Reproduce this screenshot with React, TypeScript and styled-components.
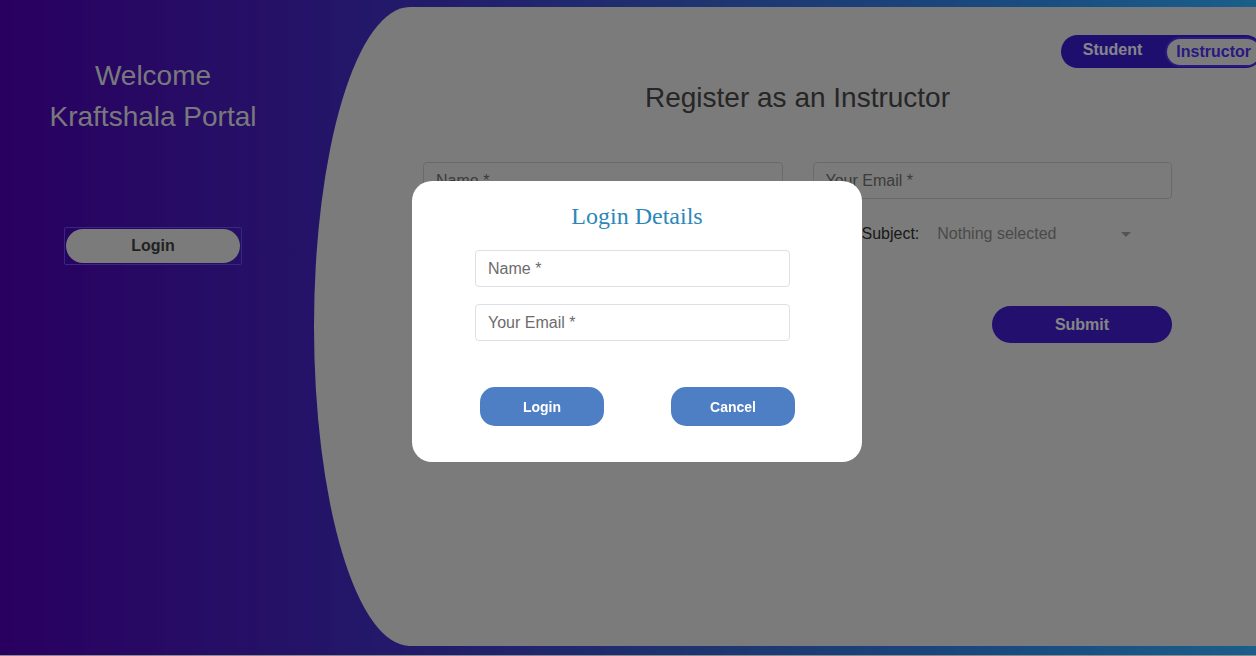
import React from "react";
import styled, { createGlobalStyle } from "styled-components";

const GlobalStyle = createGlobalStyle`
  html, body {
    margin: 0;
    padding: 0;
    background: #ffffff;
    overflow: hidden;
    font-family: "Liberation Sans", Arial, sans-serif;
  }
  * { box-sizing: border-box; }
`;

const Page = styled.div`
  display: flex;
  height: 655px;
  padding: 7px 0 9px 0;
  background: linear-gradient(
    to right,
    #4c00af 0%,
    #402fc1 32%,
    #3860cc 56%,
    #2f87e9 80%,
    #30acfb 100%
  );
`;

const Sidebar = styled.aside`
  width: 306px;
  flex-shrink: 0;
  display: flex;
  flex-direction: column;
  align-items: center;
  padding-top: 48px;
`;

const Welcome = styled.h1`
  margin: 0;
  font-size: 28px;
  font-weight: normal;
  line-height: 41px;
  color: #dcdce2;
  text-align: center;
`;

const FocusFrame = styled.div`
  margin-top: 90px;
  padding: 1px;
  border: 1px solid #5d4be5;
  border-radius: 2px;
`;

const SideButton = styled.button`
  display: block;
  width: 174px;
  height: 34px;
  border: none;
  border-radius: 17px;
  background: #e0e1e0;
  color: #3e3e3e;
  font-family: inherit;
  font-size: 16px;
  font-weight: bold;
`;

const Panel = styled.main`
  flex: 1;
  margin-left: 8px;
  background: #e0e1e0;
  border-radius: 96px 0 0 96px / 320px 0 0 320px;
  display: flex;
  flex-direction: column;
  padding: 28px 0 0 109px;
  overflow: hidden;
`;

const TopBar = styled.div`
  display: flex;
  justify-content: flex-end;
  margin-right: -6px;
`;

const Toggle = styled.div`
  display: flex;
  align-items: center;
  height: 33px;
  padding-left: 22px;
  gap: 23px;
  background: #381bc8;
  border-radius: 17px;
`;

const ToggleOption = styled.span<{ $active?: boolean }>`
  display: flex;
  align-items: center;
  font-size: 16px;
  font-weight: bold;
  ${(p) =>
    p.$active
      ? `
    height: 30px;
    padding: 0 9px;
    border: 2px solid #4c2fe9;
    border-radius: 16px;
    background: #e0e1e0;
    color: #4c2fe9;
  `
      : `
    color: #f2f2ff;
    margin-top: -4px;
  `}
`;

const Content = styled.div`
  display: flex;
  flex-direction: column;
  margin-right: 84px;
`;

const Heading = styled.h2`
  margin: 15px 0 0 0;
  font-size: 28px;
  font-weight: normal;
  line-height: 30px;
  color: #454545;
  text-align: center;
`;

const FormGrid = styled.div`
  display: grid;
  grid-template-columns: 1fr 1fr;
  column-gap: 30px;
  row-gap: 20px;
  margin-top: 49px;
`;

const TextInput = styled.input<{ $light?: boolean }>`
  display: block;
  width: 100%;
  height: 37px;
  padding: 0 12px;
  border: 1px solid ${(p) => (p.$light ? "#dfdfe6" : "#c1c1c1")};
  border-radius: 4px;
  background: transparent;
  font-family: inherit;
  font-size: 16px;
  &::placeholder {
    color: ${(p) => (p.$light ? "#6c6c6c" : "#6d6d6d")};
    opacity: 1;
  }
`;

const SubjectCell = styled.div`
  display: flex;
  align-items: center;
  height: 30px;
  padding-left: 49px;
  font-size: 16px;
`;

const SubjectLabel = styled.label`
  color: #2f2f2f;
`;

const SelectBox = styled.div`
  display: flex;
  align-items: center;
  justify-content: space-between;
  width: 218px;
  margin-left: 6px;
  padding: 0 12px;
  color: #878787;
  &::after {
    content: "";
    border-left: 5px solid transparent;
    border-right: 5px solid transparent;
    border-top: 5px solid #9a9a9a;
  }
`;

const SubmitButton = styled.button`
  align-self: flex-end;
  width: 180px;
  height: 37px;
  margin-top: 57px;
  border: none;
  border-radius: 19px;
  background: #3e1dc8;
  color: #f2f2f2;
  font-family: inherit;
  font-size: 16px;
  font-weight: bold;
`;

const Overlay = styled.div`
  position: fixed;
  inset: 0;
  background: rgba(0, 0, 0, 0.45);
  display: flex;
  align-items: flex-start;
  padding: 181px 0 0 412px;
`;

const Modal = styled.div`
  width: 450px;
  height: 281px;
  background: #ffffff;
  border-radius: 20px;
  display: flex;
  flex-direction: column;
`;

const ModalTitle = styled.h3`
  margin: 21px 0 0 0;
  font-family: "Liberation Serif", "Times New Roman", serif;
  font-size: 24px;
  font-weight: normal;
  line-height: 28px;
  color: #2b87b8;
  text-align: center;
`;

const ModalFields = styled.div`
  display: flex;
  flex-direction: column;
  gap: 17px;
  margin: 20px 72px 0 63px;
`;

const ModalActions = styled.div`
  display: flex;
  gap: 67px;
  margin: 46px 0 0 68px;
`;

const ModalButton = styled.button`
  width: 124px;
  height: 39px;
  border: none;
  border-radius: 15px;
  background: #4e7ec4;
  color: #ffffff;
  font-family: "Liberation Sans", Arial, sans-serif;
  font-size: 14px;
  font-weight: bold;
`;

export default function App() {
  return (
    <>
      <GlobalStyle />
      <Page>
        <Sidebar>
          <Welcome>
            Welcome
            <br />
            Kraftshala Portal
          </Welcome>
          <FocusFrame>
            <SideButton>Login</SideButton>
          </FocusFrame>
        </Sidebar>
        <Panel>
          <TopBar>
            <Toggle>
              <ToggleOption>Student</ToggleOption>
              <ToggleOption $active>Instructor</ToggleOption>
            </Toggle>
          </TopBar>
          <Content>
            <Heading>Register as an Instructor</Heading>
            <FormGrid>
              <TextInput placeholder="Name *" />
              <TextInput placeholder="Your Email *" />
              <div />
              <SubjectCell>
                <SubjectLabel>Subject:</SubjectLabel>
                <SelectBox>Nothing selected</SelectBox>
              </SubjectCell>
            </FormGrid>
            <SubmitButton>Submit</SubmitButton>
          </Content>
        </Panel>
      </Page>
      <Overlay>
        <Modal>
          <ModalTitle>Login Details</ModalTitle>
          <ModalFields>
            <TextInput $light placeholder="Name *" />
            <TextInput $light placeholder="Your Email *" />
          </ModalFields>
          <ModalActions>
            <ModalButton>Login</ModalButton>
            <ModalButton>Cancel</ModalButton>
          </ModalActions>
        </Modal>
      </Overlay>
    </>
  );
}
